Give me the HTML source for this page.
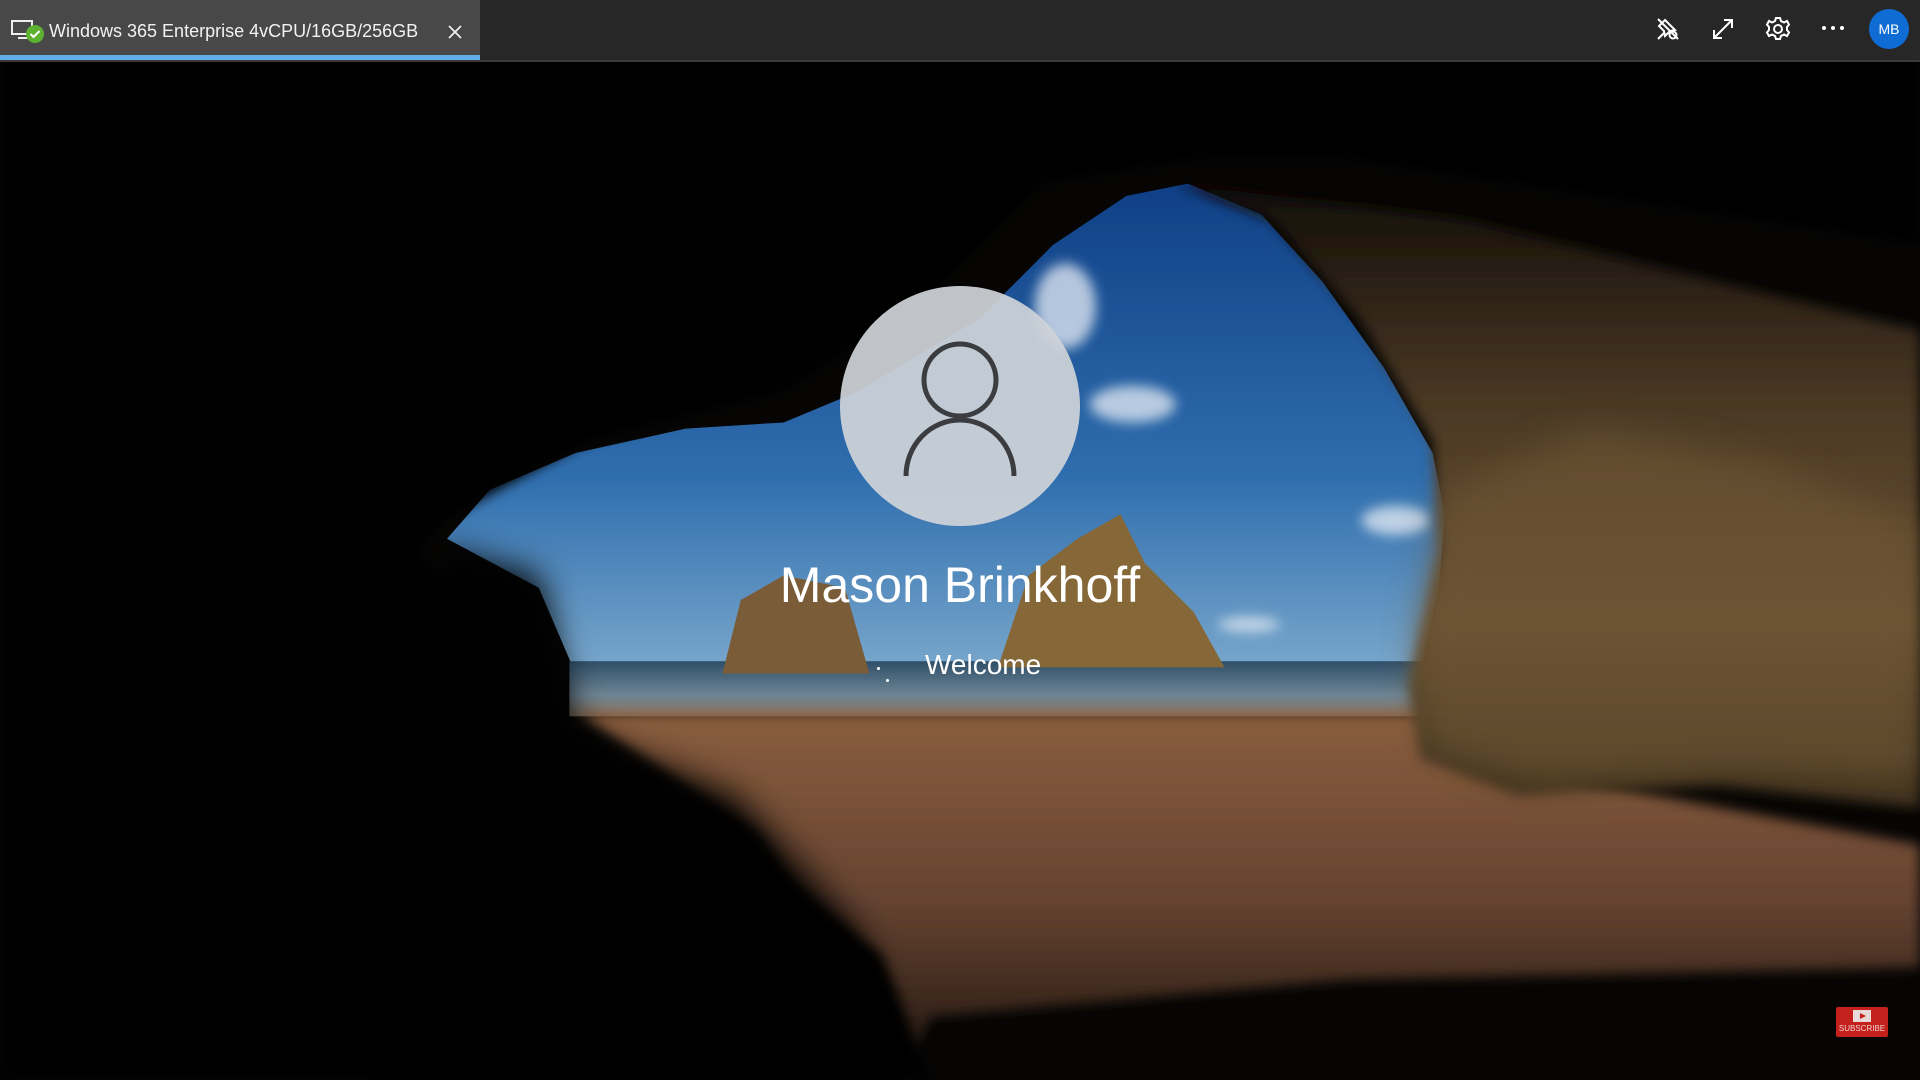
<!DOCTYPE html>
<html><head><meta charset="utf-8"><style>
html,body{margin:0;padding:0;width:1920px;height:1080px;overflow:hidden;background:#050505;font-family:"Liberation Sans",sans-serif}
.bg{position:absolute;left:0;top:0;width:1920px;height:1080px}
.bar{position:absolute;left:0;top:0;width:1920px;height:60px;background:#272727}
.tab{position:absolute;left:0;top:0;width:480px;height:60px;background:#484848}
.tab .line{position:absolute;left:0;bottom:0;width:480px;height:5px;background:#62aee9}
.tab .t{position:absolute;left:49px;top:21px;font-size:18px;color:#f2f2f2;white-space:nowrap}
.sep{position:absolute;left:0;top:60px;width:1920px;height:2px;background:#3a3a3a}
</style></head><body>
<svg class="bg" viewBox="0 0 1568 882" preserveAspectRatio="none">
<defs>
<linearGradient id="sky" x1="0" y1="0" x2="0" y2="1"><stop offset="0" stop-color="#0f3f86"/><stop offset="0.6" stop-color="#2f6eae"/><stop offset="1" stop-color="#7aa8cc"/></linearGradient>
<linearGradient id="sea" x1="0" y1="0" x2="0" y2="1"><stop offset="0" stop-color="#2e4e68"/><stop offset="0.6" stop-color="#6c8494"/><stop offset="1" stop-color="#8a7a6a"/></linearGradient>
<linearGradient id="sand" x1="0" y1="0" x2="0" y2="1"><stop offset="0" stop-color="#8a5e3e"/><stop offset="0.55" stop-color="#644230"/><stop offset="1" stop-color="#221710"/></linearGradient>
<linearGradient id="rock" x1="0" y1="0" x2="0" y2="1"><stop offset="0" stop-color="#120d08"/><stop offset="0.35" stop-color="#4a3824"/><stop offset="0.7" stop-color="#6a5232"/><stop offset="1" stop-color="#3a2c1a"/></linearGradient>
<filter id="b"><feGaussianBlur stdDeviation="5"/></filter>
<filter id="b2"><feGaussianBlur stdDeviation="14"/></filter>
</defs>
<rect width="1568" height="882" fill="#060504"/>
<polygon points="365,440 400,400 470,370 560,350 640,345 700,320 800,260 860,200 920,160 970,150 1030,175 1080,230 1130,300 1170,370 1180,420 1175,480 1160,550 470,550 440,480" fill="url(#sky)"/>
<g filter="url(#b)" fill="#e8eef5" opacity="0.75">
<ellipse cx="870" cy="250" rx="25" ry="35"/><ellipse cx="925" cy="330" rx="35" ry="15"/><ellipse cx="1140" cy="425" rx="28" ry="12"/><ellipse cx="1020" cy="510" rx="25" ry="6"/>
</g>
<rect x="465" y="540" width="700" height="45" fill="url(#sea)"/>
<polygon points="470,582 1160,582 1300,640 1568,690 1568,790 1100,800 760,830 740,870 620,680" fill="url(#sand)" filter="url(#b)"/>
<polygon points="590,550 605,490 640,470 690,480 710,550" fill="#7a5c38"/>
<polygon points="815,545 840,470 880,440 915,420 935,460 975,500 1000,545" fill="#866838"/>
<polygon points="960,150 1040,160 1200,180 1400,230 1568,270 1568,660 1400,640 1240,650 1160,620 1150,560 1175,450 1170,360 1110,260 1040,180" fill="url(#rock)" filter="url(#b)"/>
<polygon points="1180,400 1300,350 1450,380 1568,430 1568,640 1420,630 1250,640 1165,610 1155,520" fill="#6e5634" opacity="0.6" filter="url(#b2)"/>
<polygon points="0,0 1568,0 1568,200 1300,160 1100,130 980,130 850,150 760,240 640,320 480,360 370,420 340,450 460,600 620,700 720,780 760,882 0,882" fill="#050403" filter="url(#b)"/>
<polygon points="360,450 440,470 470,600 600,650 700,760 740,882 300,882 330,600" fill="#060505" filter="url(#b2)"/>
</svg>
<div class="bar"></div>
<div class="sep"></div>
<div class="tab">
<svg style="position:absolute;left:11px;top:19px" width="34" height="26" viewBox="0 0 34 26"><rect x="1" y="2" width="20" height="13" fill="none" stroke="#eee" stroke-width="2"/><path d="M7 19h10" stroke="#eee" stroke-width="2"/><circle cx="24" cy="15" r="9" fill="#5cb230"/><path d="M19.5 15l3 3 6-6" fill="none" stroke="#fff" stroke-width="2"/></svg>
<div class="t">Windows 365 Enterprise 4vCPU/16GB/256GB</div>
<svg style="position:absolute;left:448px;top:25px" width="14" height="14" viewBox="0 0 14 14"><path d="M1 1L13 13M13 1L1 13" stroke="#eee" stroke-width="1.8"/></svg>
<div class="line"></div>
</div>
<svg style="position:absolute;left:1655px;top:16px" width="26" height="26" viewBox="0 0 26 26" fill="none" stroke="#fff" stroke-width="2"><path d="M10 4l10 10-5 1-5 5-1-5-5-5z"/><path d="M3 23l6-6"/><path d="M3 3l20 20"/><circle cx="18" cy="19" r="3.5"/></svg>
<svg style="position:absolute;left:1710px;top:16px" width="26" height="26" viewBox="0 0 26 26" fill="none" stroke="#fff" stroke-width="2"><path d="M4 22L22 4M14 4h8v8M4 14v8h8"/></svg>
<svg style="position:absolute;left:1764px;top:15px" width="28" height="28" viewBox="0 0 28 28" fill="none" stroke="#fff" stroke-width="2"><circle cx="14" cy="14" r="4"/><path d="M12 3h4l1 3 3 1.5 3-1.5 2 3.5-2 2.5v3l2 2.5-2 3.5-3-1.5-3 1.5-1 3h-4l-1-3-3-1.5-3 1.5-2-3.5 2-2.5v-3l-2-2.5 2-3.5 3 1.5 3-1.5z"/></svg>
<div style="position:absolute;left:1822px;top:26px;width:22px;height:4px;display:flex;justify-content:space-between"><i style="width:4px;height:4px;background:#fff;border-radius:2px"></i><i style="width:4px;height:4px;background:#fff;border-radius:2px"></i><i style="width:4px;height:4px;background:#fff;border-radius:2px"></i></div>
<div style="position:absolute;left:1869px;top:9px;width:40px;height:40px;border-radius:50%;background:#0f6cd4;color:#fff;font-size:14px;line-height:40px;text-align:center">MB</div>

<div style="position:absolute;left:840px;top:286px;width:240px;height:240px;border-radius:50%;background:#cfd3d8;opacity:0.93"></div>
<svg style="position:absolute;left:840px;top:286px" width="240" height="240" viewBox="0 0 240 240" fill="none" stroke="#3a3c40" stroke-width="5"><circle cx="120" cy="94" r="36"/><path d="M66 190a54 56 0 0 1 108 0"/></svg>
<div style="position:absolute;left:660px;top:550px;width:600px;text-align:center;color:#fff;font-size:50px;line-height:70px">Mason Brinkhoff</div>
<div style="position:absolute;left:925px;top:645px;color:#fff;font-size:28px;line-height:40px">Welcome</div>
<div style="position:absolute;left:877px;top:667px;width:3px;height:3px;background:#fff;border-radius:2px"></div>
<div style="position:absolute;left:886px;top:679px;width:3px;height:3px;background:#fff;border-radius:2px"></div>

<div style="position:absolute;left:1836px;top:1007px;width:52px;height:30px;background:#c4201c;border-radius:2px">
<div style="position:absolute;left:17px;top:3px;width:18px;height:12px;background:#e8d8d8"></div>
<div style="position:absolute;left:24px;top:6px;width:0;height:0;border-left:6px solid #c4201c;border-top:3px solid transparent;border-bottom:3px solid transparent"></div>
<div style="position:absolute;left:0;top:17px;width:52px;text-align:center;color:#f0d0d0;font-size:8px">SUBSCRIBE</div>
</div>
</body></html>
